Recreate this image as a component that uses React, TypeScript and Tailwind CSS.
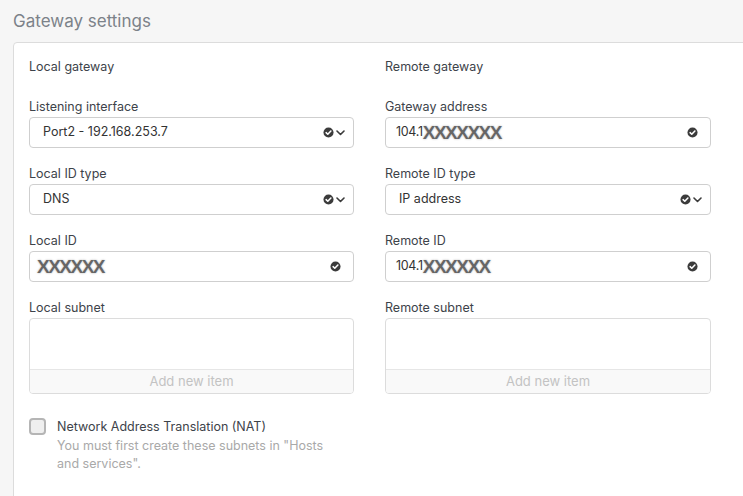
import React from "react";

const font = { fontFamily: "Inter, 'Noto Sans', sans-serif" };

function CheckIcon() {
  return (
    <svg width="11" height="11" viewBox="0 0 12 12" className="shrink-0">
      <circle cx="6" cy="6" r="5.5" fill="#3b3b3b" />
      <path d="M3.4 6.2 L5.2 7.9 L8.6 4.4" stroke="#fff" strokeWidth="1.7" fill="none" strokeLinecap="round" strokeLinejoin="round" />
    </svg>
  );
}

function Chevron() {
  return (
    <svg width="9" height="6" viewBox="0 0 9 6" className="shrink-0">
      <path d="M1 1 L4.5 4.5 L8 1" stroke="#3b3b3b" strokeWidth="1.6" fill="none" strokeLinecap="round" strokeLinejoin="round" />
    </svg>
  );
}

function Redact({ n }: { n: number }) {
  return (
    <span
      className="inline-block font-bold text-[#666666] leading-[14px] tracking-[-1.5px]"
      style={{ fontFamily: "'Liberation Sans', Arial, sans-serif", fontSize: 19, textShadow: "0 0 1px #fff, 0 0 2px #aaa" }}
    >
      {"X".repeat(n)}
    </span>
  );
}

function Label({ children }: { children: React.ReactNode }) {
  return <div className="h-[18px] leading-[18px] text-[12.5px] text-[#3d434a]">{children}</div>;
}

function Select({ value }: { value: string }) {
  return (
    <div className="mt-px h-[31px] border border-[#cfcfcf] rounded-[4px] bg-white flex items-center pl-[13px] pr-[8px]">
      <span className="flex-1 text-[12.5px] text-[#333]">{value}</span>
      <div className="flex items-center gap-[2px]">
        <CheckIcon />
        <Chevron />
      </div>
    </div>
  );
}

function Input({ prefix, n }: { prefix?: string; n: number }) {
  return (
    <div className={`mt-px h-[31px] border border-[#cfcfcf] rounded-[4px] bg-white flex items-center pr-[12px] ${prefix ? "pl-[10px]" : "pl-[7px]"}`}>
      <span className="flex-1 flex items-center text-[12.5px] text-[#333]">
        {prefix ? <span className="tracking-[-0.3px]">{prefix}</span> : null}
        <Redact n={n} />
      </span>
      <CheckIcon />
    </div>
  );
}

function Subnet() {
  return (
    <div className="mt-px h-[76px] border border-[#dcdcdc] rounded-[4px] bg-white flex flex-col overflow-hidden">
      <div className="h-[50px]" />
      <div className="flex-1 border-t border-[#e6e6e6] bg-[#f9f9f9] flex items-center justify-center text-[13px] text-[#c3c3c3]">
        Add new item
      </div>
    </div>
  );
}

function Field({ label, children }: { label: string; children: React.ReactNode }) {
  return (
    <div className="flex flex-col">
      <Label>{label}</Label>
      {children}
    </div>
  );
}

export default function App() {
  return (
    <div className="w-[743px] h-[496px] overflow-hidden bg-[#f6f6f6] flex flex-col" style={font}>
      <div className="pl-[13px] pt-[10px] h-[42px] shrink-0 text-[17px] leading-[22px] text-[#7c8289]">Gateway settings</div>
      <div className="ml-[13px] w-[760px] h-[480px] shrink-0 bg-white border border-[#dcdcdc] rounded-tl-[4px] pl-[15px] pt-[15px]">
        <div className="flex gap-[31px]">
          <div className="w-[325px] flex flex-col">
            <div className="h-[18px] leading-[18px] text-[12.5px] text-[#3d434a] mb-[22px]">Local gateway</div>
            <div className="flex flex-col gap-[17px]">
              <Field label="Listening interface">
                <Select value="Port2 - 192.168.253.7" />
              </Field>
              <Field label="Local ID type">
                <Select value="DNS" />
              </Field>
              <Field label="Local ID">
                <Input n={6} />
              </Field>
              <Field label="Local subnet">
                <Subnet />
              </Field>
            </div>
            <div className="mt-[24px] flex gap-[11px]">
              <div className="w-[17px] h-[17px] rounded-[4px] border-2 border-[#b5b5b5] bg-[#efefef] shrink-0" />
              <div className="flex flex-col">
                <div className="text-[12.5px] leading-[18px] text-[#3d434a]">Network Address Translation (NAT)</div>
                <div className="text-[12.5px] leading-[18px] text-[#a9a9a9] mt-[1px]">
                  You must first create these subnets in "Hosts
                  <br />
                  and services".
                </div>
              </div>
            </div>
          </div>
          <div className="w-[326px] flex flex-col">
            <div className="h-[18px] leading-[18px] text-[12.5px] text-[#3d434a] mb-[22px]">Remote gateway</div>
            <div className="flex flex-col gap-[17px]">
              <Field label="Gateway address">
                <Input prefix="104.1" n={7} />
              </Field>
              <Field label="Remote ID type">
                <Select value="IP address" />
              </Field>
              <Field label="Remote ID">
                <Input prefix="104.1" n={6} />
              </Field>
              <Field label="Remote subnet">
                <Subnet />
              </Field>
            </div>
          </div>
        </div>
      </div>
    </div>
  );
}
